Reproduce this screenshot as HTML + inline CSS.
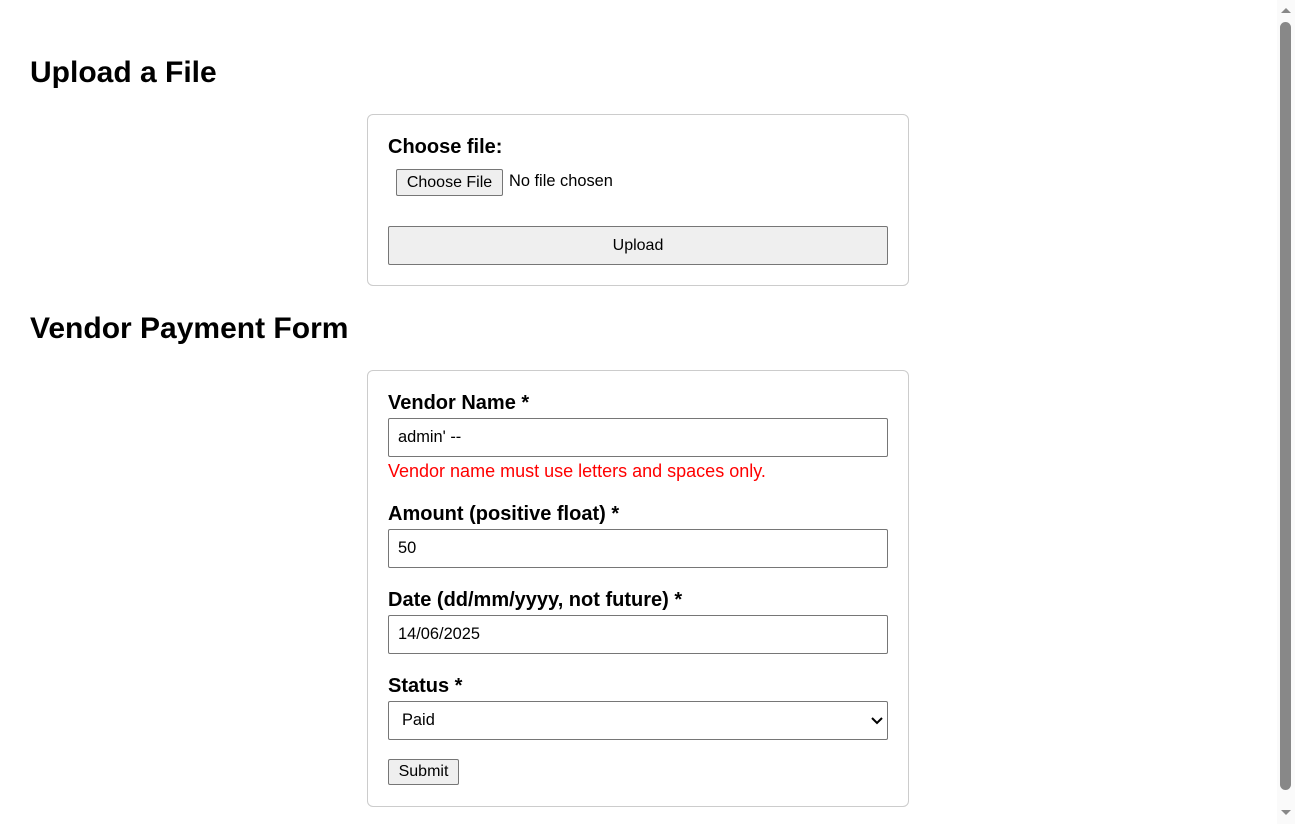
<!DOCTYPE html>
<html><head><style>
body{margin:0;width:1295px;height:824px;overflow:hidden;background:#fff;font-family:"Liberation Sans",Arial,sans-serif;color:#000;position:relative}
.a{position:absolute;white-space:nowrap}
h2{margin:0;font-size:30px;font-weight:bold;position:absolute;left:30px;line-height:32px}
.box{position:absolute;left:367px;width:542px;border:1px solid #ccc;border-radius:6px;box-sizing:border-box}
.lbl{position:absolute;left:388px;font-size:20px;font-weight:bold;line-height:22px}
.inp{position:absolute;left:388px;width:500px;height:39px;border:1px solid #767676;border-radius:2px;box-sizing:border-box;font-size:16.4px;line-height:37px;padding-left:9px}
.btn{position:absolute;background:#efefef;border:1px solid #767676;border-radius:2px;box-sizing:border-box;font-size:16px;text-align:center}
</style></head><body>
<h2 style="top:57px">Upload a File</h2>
<div class="box" style="top:114px;height:172px"></div>
<div class="lbl" style="top:136px">Choose file:</div>
<div class="btn" style="left:396px;top:169px;width:107px;height:27px;line-height:25px">Choose File</div>
<div class="a" style="left:509px;top:172px;font-size:16.4px">No file chosen</div>
<div class="btn" style="left:388px;top:226px;width:500px;height:39px;line-height:37px">Upload</div>

<h2 style="top:313px">Vendor Payment Form</h2>
<div class="box" style="top:370px;height:437px"></div>
<div class="lbl" style="top:392px">Vendor Name *</div>
<div class="inp" style="top:418px">admin' --</div>
<div class="a" style="left:388px;top:461px;font-size:18px;color:#f00">Vendor name must use letters and spaces only.</div>
<div class="lbl" style="top:503px">Amount (positive float) *</div>
<div class="inp" style="top:529px">50</div>
<div class="lbl" style="top:589px">Date (dd/mm/yyyy, not future) *</div>
<div class="inp" style="top:615px">14/06/2025</div>
<div class="lbl" style="top:675px">Status *</div>
<div class="inp" style="top:701px;padding-left:13px">Paid
<svg style="position:absolute;right:4px;top:14px" width="12" height="10" viewBox="0 0 12 10"><path d="M1 2l5 5 5-5" fill="none" stroke="#000" stroke-width="2"/></svg></div>
<div class="btn" style="left:388px;top:759px;width:71px;height:26px;line-height:24px">Submit</div>

<div class="a" style="left:1277px;top:0;width:18px;height:824px;background:#fafafa"></div>
<div class="a" style="left:1280px;top:22px;width:11px;height:768px;background:#888;border-radius:6px"></div>
<svg class="a" style="left:1279px;top:6px" width="14" height="8"><path d="M2 7l5-5 5 5z" fill="#888"/></svg>
<svg class="a" style="left:1279px;top:809px" width="14" height="8"><path d="M2 1l5 5 5-5z" fill="#888"/></svg>
</body></html>
